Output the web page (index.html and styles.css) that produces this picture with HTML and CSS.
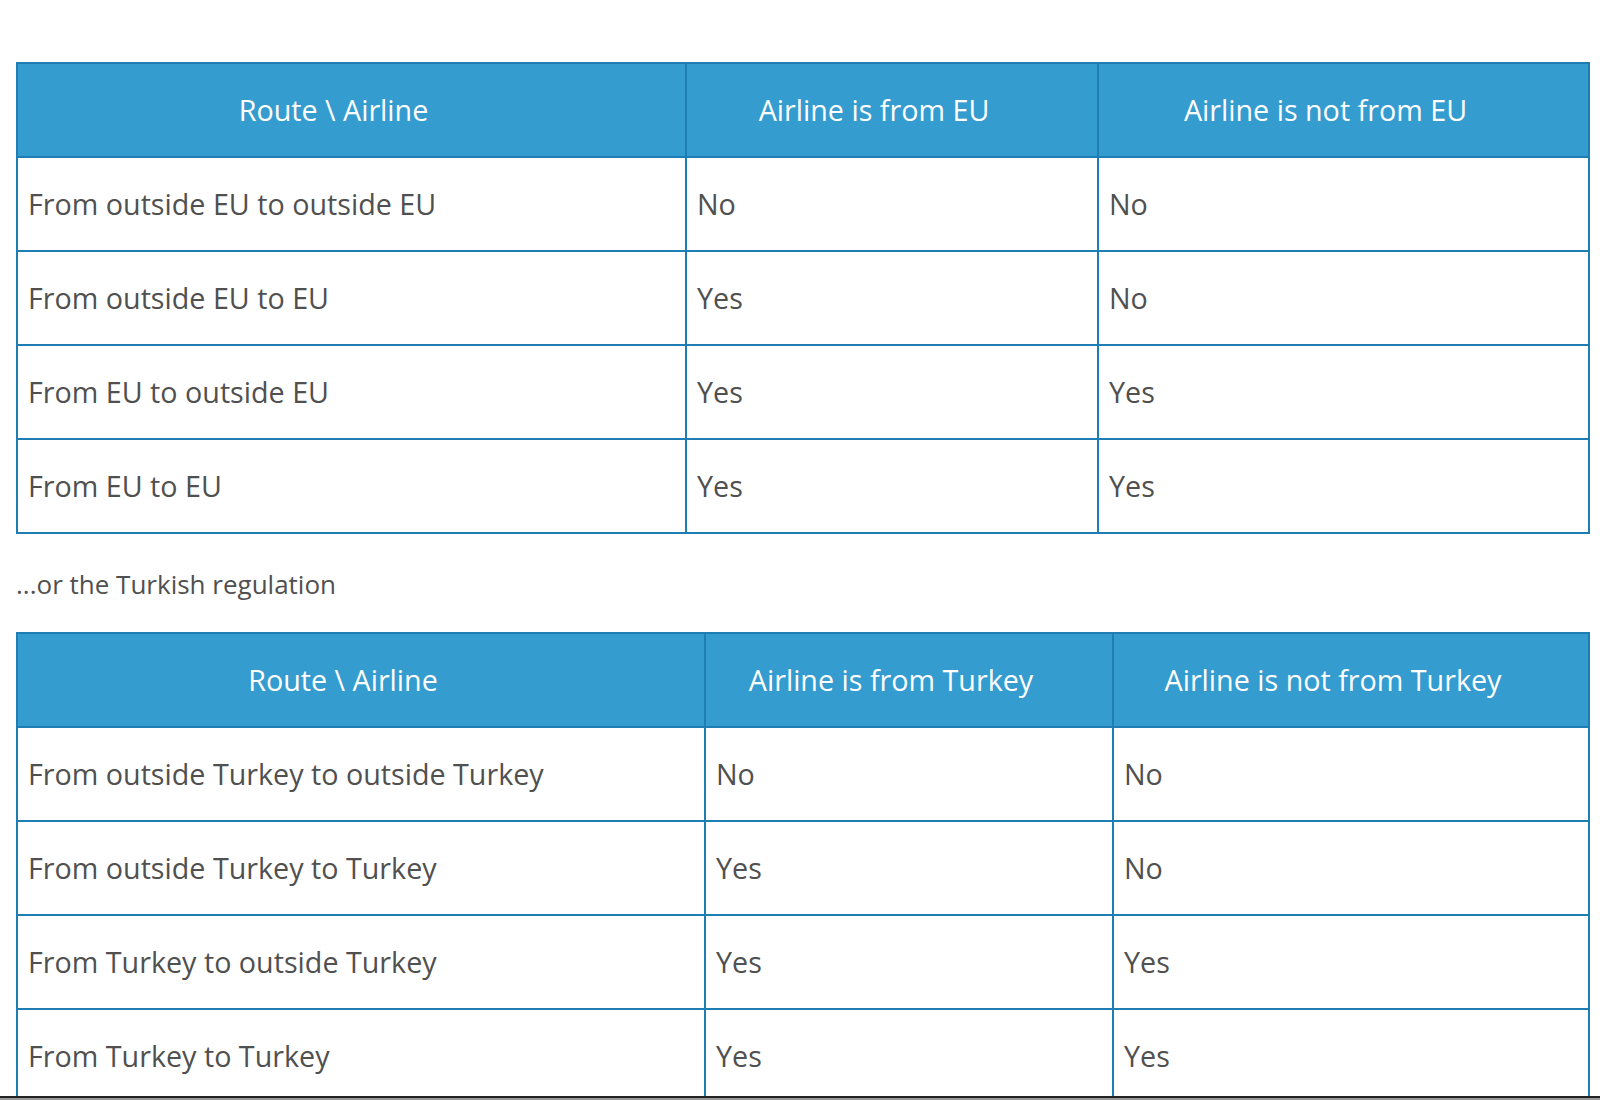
FILE: index.html
```html
<!DOCTYPE html>
<html>
<head>
<meta charset="utf-8">
<link rel="stylesheet" href="styles.css">
</head>
<body>
<div class="page">
  <table class="grid grid-eu">
    <colgroup>
      <col class="c1"><col class="c2"><col class="c3">
    </colgroup>
    <thead>
      <tr><th>Route \ Airline</th><th>Airline is from EU</th><th>Airline is not from EU</th></tr>
    </thead>
    <tbody>
      <tr><td>From outside EU to outside EU</td><td>No</td><td>No</td></tr>
      <tr><td>From outside EU to EU</td><td>Yes</td><td>No</td></tr>
      <tr><td>From EU to outside EU</td><td>Yes</td><td>Yes</td></tr>
      <tr><td>From EU to EU</td><td>Yes</td><td>Yes</td></tr>
    </tbody>
  </table>
  <p class="note">...or the Turkish regulation</p>
  <table class="grid grid-tr">
    <colgroup>
      <col class="c1"><col class="c2"><col class="c3">
    </colgroup>
    <thead>
      <tr><th>Route \ Airline</th><th>Airline is from Turkey</th><th>Airline is not from Turkey</th></tr>
    </thead>
    <tbody>
      <tr><td>From outside Turkey to outside Turkey</td><td>No</td><td>No</td></tr>
      <tr><td>From outside Turkey to Turkey</td><td>Yes</td><td>No</td></tr>
      <tr><td>From Turkey to outside Turkey</td><td>Yes</td><td>Yes</td></tr>
      <tr><td>From Turkey to Turkey</td><td>Yes</td><td>Yes</td></tr>
    </tbody>
  </table>
</div>
<div class="edge"></div>
</body>
</html>
```
FILE: styles.css
```css
html, body {
  margin: 0;
  padding: 0;
  background: #ffffff;
}
body {
  font-family: "Open Sans", "Liberation Sans", sans-serif;
  color: #555555;
  overflow: hidden;
  height: 1100px;
}
.page {
  padding: 62px 10px 0 16px;
  width: 1572px;
}
.grid {
  width: 1572px;
  border-collapse: collapse;
  table-layout: fixed;
  border: 2px solid #1e7db3;
}
.grid th,
.grid td {
  border: 2px solid #1e7db3;
  height: 94px;
  box-sizing: border-box;
  font-size: 28.7px;
  line-height: 32px;
  font-weight: 400;
  vertical-align: middle;
}
.grid th {
  background: #349ccf;
  color: #ffffff;
  text-align: center;
  padding: 0 46px 0 10px;
}
.grid td {
  text-align: left;
  padding: 0 10px;
  color: #505050;
}
.grid-eu .c1 { width: 669px; }
.grid-eu .c2 { width: 412px; }
.grid-eu .c3 { width: 491px; }
.grid-tr .c1 { width: 688px; }
.grid-tr .c2 { width: 408px; }
.grid-tr .c3 { width: 476px; }
.note {
  margin: 34px 0 32px 0;
  font-size: 26px;
  line-height: 32px;
  color: #505050;
}
.edge {
  position: fixed;
  left: 0;
  right: 0;
  bottom: 0;
  height: 2px;
  border-top: 2px solid #222222;
  background: #9a9a9a;
}
```
